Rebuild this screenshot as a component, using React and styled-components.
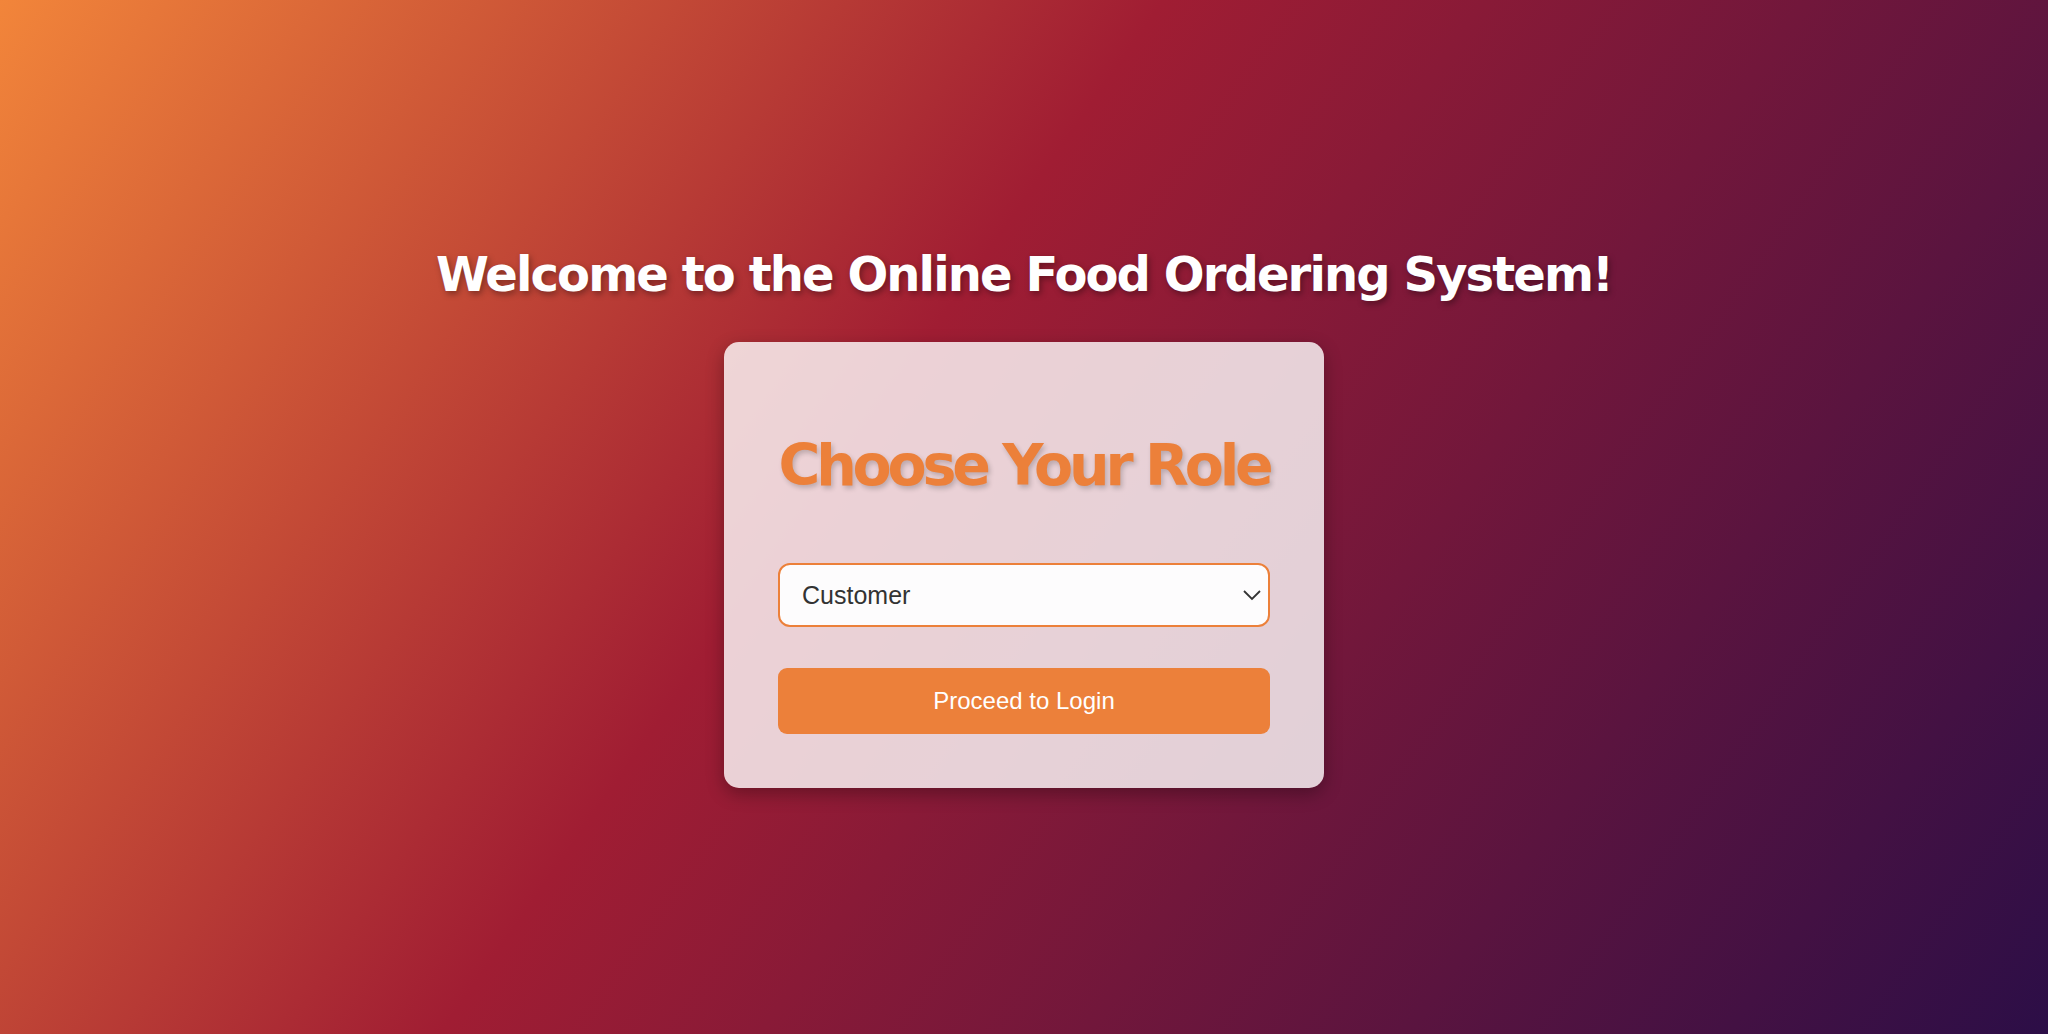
import React, { useState } from 'react';
import styled, { createGlobalStyle } from 'styled-components';

const GlobalStyle = createGlobalStyle`
  html, body {
    margin: 0;
    padding: 0;
  }
  body {
    font-family: "Liberation Sans", Arial, sans-serif;
  }
`;

const Page = styled.div`
  min-height: 100vh;
  display: flex;
  flex-direction: column;
  align-items: center;
  justify-content: center;
  background: linear-gradient(125deg, #f2853a 0%, #a01d33 42%, #2c0e47 100%);
`;

const Title = styled.h1`
  margin: 0 0 40px;
  font-family: "DejaVu Sans", Verdana, sans-serif;
  font-weight: bold;
  font-size: 48px;
  line-height: 56px;
  letter-spacing: -1.9px;
  white-space: nowrap;
  color: #ffffff;
  text-shadow: 2px 3px 6px rgba(0, 0, 0, 0.35);
`;

const Card = styled.div`
  width: 600px;
  box-sizing: border-box;
  padding: 54px 54px;
  border-radius: 15px;
  background: rgba(255, 255, 255, 0.8);
  box-shadow: 0 6px 18px rgba(0, 0, 0, 0.3);
  display: flex;
  flex-direction: column;
`;

const Heading = styled.h2`
  margin: 35px 0 64px;
  font-family: "DejaVu Sans", Verdana, sans-serif;
  font-weight: bold;
  font-size: 57px;
  line-height: 68px;
  letter-spacing: -4.2px;
  white-space: nowrap;
  color: #ec803a;
  text-align: center;
  text-shadow: 2px 3px 5px rgba(0, 0, 0, 0.2);
`;

const SelectWrap = styled.div`
  position: relative;
  height: 64px;
`;

const Select = styled.select`
  appearance: none;
  width: 100%;
  height: 100%;
  box-sizing: border-box;
  padding: 0 22px;
  border: 2px solid #ec803a;
  border-radius: 12px;
  background: #fdfcfd;
  font-family: "Liberation Sans", Arial, sans-serif;
  font-size: 25px;
  color: #333333;
  outline: none;
`;

const Chevron = styled.svg`
  position: absolute;
  right: 8px;
  top: 50%;
  transform: translateY(-50%);
  pointer-events: none;
`;

const Button = styled.button`
  margin-top: 41px;
  height: 66px;
  border: none;
  border-radius: 9px;
  background: #ec803a;
  color: #ffffff;
  font-family: "Liberation Sans", Arial, sans-serif;
  font-size: 24px;
  cursor: pointer;
`;

export default function App() {
  const [role, setRole] = useState('customer');

  return (
    <>
      <GlobalStyle />
      <Page>
        <Title>Welcome to the Online Food Ordering System!</Title>
        <Card>
          <Heading>Choose Your Role</Heading>
          <SelectWrap>
            <Select value={role} onChange={(e) => setRole(e.target.value)}>
              <option value="customer">Customer</option>
              <option value="restaurant">Restaurant</option>
              <option value="admin">Admin</option>
            </Select>
            <Chevron width="20" height="12" viewBox="0 0 20 12">
              <path d="M2 2 L10 10 L18 2" fill="none" stroke="#333" strokeWidth="1.8" />
            </Chevron>
          </SelectWrap>
          <Button>Proceed to Login</Button>
        </Card>
      </Page>
    </>
  );
}
